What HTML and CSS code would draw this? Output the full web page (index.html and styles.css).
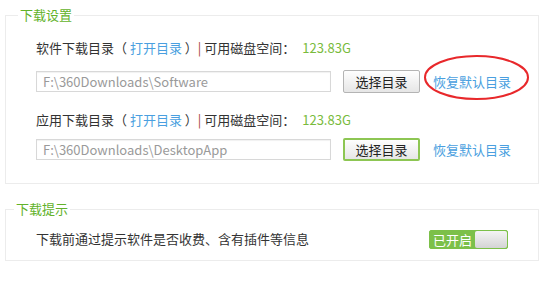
FILE: index.html
```html
<!DOCTYPE html>
<html lang="zh-CN">
<head>
    <meta charset="UTF-8">
    <title>下载设置</title>
    <link rel="stylesheet" href="styles.css">
</head>
<body>
    <fieldset class="group">
        <legend class="group-title">下载设置</legend>
        <div class="group-body">
            <p class="dir-info">软件下载目录（ <a class="link">打开目录</a> ）<span class="sep">|</span> 可用磁盘空间： <span class="space">123.83G</span></p>
            <div class="dir-row">
                <input class="path" type="text" value="F:\360Downloads\Software" readonly>
                <button class="pick">选择目录</button>
                <a class="link reset marked">恢复默认目录
                    <svg class="mark" width="107" height="47" viewBox="0 0 107 47">
                        <ellipse cx="53.5" cy="23.5" rx="51.5" ry="21.5" fill="none" stroke="#e8282b" stroke-width="2"/>
                    </svg>
                </a>
            </div>

            <p class="dir-info second">应用下载目录（ <a class="link">打开目录</a> ）<span class="sep">|</span> 可用磁盘空间： <span class="space">123.83G</span></p>
            <div class="dir-row tight">
                <input class="path" type="text" value="F:\360Downloads\DesktopApp" readonly>
                <button class="pick active">选择目录</button>
                <a class="link reset">恢复默认目录</a>
            </div>
        </div>
    </fieldset>

    <fieldset class="group tips">
        <legend class="group-title">下载提示</legend>
        <div class="group-body tip-row">
            <span>下载前通过提示软件是否收费、含有插件等信息</span>
            <div class="switch">
                <span class="switch-on">已开启</span>
                <span class="switch-knob"></span>
            </div>
        </div>
    </fieldset>
</body>
</html>
```

FILE: styles.css
```css
body {
    margin: 0;
    padding: 7px 6px 0 5px;
    font-family: "Noto Sans CJK SC", sans-serif;
    font-size: 13px;
    color: #333;
    background: #fff;
}
.group {
    margin: 0;
    padding: 0;
    border: 1px solid #ececec;
}
.group-title {
    margin-left: 12px;
    padding: 0 2px;
    line-height: 16px;
    color: #62b22a;
}
.group-body {
    padding: 0 0 22px 30px;
}
.dir-info {
    margin: 15px 0 0;
    line-height: 20px;
}
.dir-info.second {
    margin-top: 17px;
}
.link {
    color: #4a9fe0;
    cursor: pointer;
}
.sep {
    color: #a5403a;
}
.space {
    color: #79bb3c;
    margin-left: 4px;
}
.dir-row {
    display: flex;
    align-items: center;
    height: 23px;
    margin-top: 12px;
}
.dir-row.tight {
    margin-top: 8px;
}
.path {
    box-sizing: border-box;
    width: 295px;
    height: 21px;
    padding: 0 6px;
    border: 1px solid #d8d8d8;
    box-shadow: inset 0 1px 1px rgba(0,0,0,0.06);
    font-family: "Noto Sans CJK SC", sans-serif;
    font-size: 13px;
    color: #9a9a9a;
    outline: none;
}
.pick {
    box-sizing: border-box;
    width: 77px;
    height: 23px;
    margin-left: 12px;
    padding: 0;
    border: 1px solid #b4b4b4;
    border-radius: 2px;
    background: linear-gradient(#fefefe, #e6e6e6);
    font-family: "Noto Sans CJK SC", sans-serif;
    font-size: 13px;
    color: #222;
}
.pick.active {
    border: 2px solid #8dc653;
}
.reset {
    position: relative;
    margin-left: 13px;
}
.mark {
    position: absolute;
    left: -10px;
    top: -18px;
}
.tips {
    margin-top: 17px;
}
.tips .group-title {
    margin-left: 8px;
}
.tip-row {
    display: flex;
    align-items: center;
    justify-content: space-between;
    height: 20px;
    padding: 12px 30px 11px 30px;
    line-height: 20px;
}
.switch {
    display: flex;
    box-sizing: border-box;
    width: 79px;
    height: 19px;
    border: 1px solid #7cc049;
    border-radius: 2px;
    background: #7cc049;
}
.switch-on {
    width: 45px;
    color: #fff;
    font-size: 13px;
    line-height: 17px;
    text-align: center;
}
.switch-knob {
    flex: 1;
    border-radius: 2px;
    background: linear-gradient(#f4f4f4, #d4d4d4);
}
```
